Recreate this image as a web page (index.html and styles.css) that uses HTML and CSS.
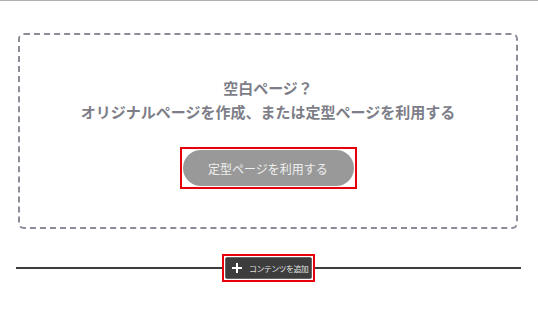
FILE: index.html
```html
<!DOCTYPE html>
<html lang="ja">
<head>
<meta charset="utf-8">
<link rel="stylesheet" href="styles.css">
</head>
<body>
<div class="topline"></div>
<div class="blank-box">
  <div class="heading">
    <div>空白ページ？</div>
    <div>オリジナルページを作成、または定型ページを利用する</div>
  </div>
  <div class="highlight pill-wrap">
    <button class="use-template">定型ページを利用する</button>
  </div>
</div>
<div class="add-row">
  <div class="seg"></div>
  <div class="highlight">
    <button class="add-btn">
      <svg class="plus" width="10" height="10" viewBox="0 0 10 10"><path d="M5 0V10M0 5H10" stroke="#fff" stroke-width="2"/></svg>
      <span>コンテンツを追加</span>
    </button>
  </div>
  <div class="seg"></div>
</div>
</body>
</html>
```
FILE: styles.css
```css
html, body {
  margin: 0;
  padding: 0;
  background: #fff;
  font-family: "Noto Sans CJK JP", "Noto Sans", sans-serif;
}
.topline {
  height: 1px;
  background: #b0b0b0;
}
.blank-box {
  margin: 32px 0 0 18px;
  width: 496px;
  height: 151px;
  border: 2px dashed #8a8c97;
  border-radius: 6px;
  display: flex;
  flex-direction: column;
  align-items: center;
  padding-top: 41px;
}
.heading {
  color: #7d7e88;
  font-size: 15px;
  font-weight: bold;
  line-height: 24px;
  text-align: center;
}
.highlight {
  border: 2px solid #e8000b;
  padding: 1px;
  display: flex;
  flex: none;
}
.pill-wrap {
  margin-top: 23px;
}
.use-template {
  width: 171px;
  height: 36px;
  border: none;
  border-radius: 18px;
  background: #999999;
  color: #f0f0f0;
  font-family: inherit;
  font-size: 12px;
  padding: 0;
}
.add-row {
  display: flex;
  align-items: center;
  margin: 25px 17px 0 16px;
}
.seg {
  flex: 1;
  height: 2px;
  background: #3c3c3c;
}
.add-btn {
  display: flex;
  align-items: center;
  width: 87px;
  height: 22px;
  padding: 0 0 0 6px;
  border: 1px solid #666;
  border-radius: 2px;
  background: #3d3d3d;
  color: #e0e0e0;
  font-family: inherit;
  font-size: 8px;
  box-sizing: border-box;
}
.plus {
  margin-right: 7px;
  flex: none;
}
.add-btn span {
  letter-spacing: -0.6px;
  white-space: nowrap;
}
```
